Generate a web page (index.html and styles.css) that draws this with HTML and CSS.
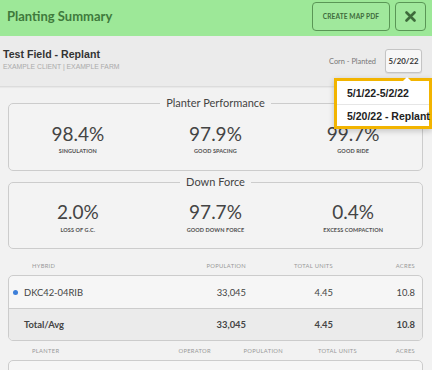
FILE: index.html
```html
<!DOCTYPE html>
<html lang="en">
<head>
  <meta charset="UTF-8" />
  <meta name="viewport" content="width=device-width, initial-scale=1.0" />
  <title>Planting Summary</title>
  <link rel="stylesheet" href="styles.css">
</head>
<body>
  <header class="topbar">
    <h1 class="title">Planting Summary</h1>
    <button class="btn-pdf">CREATE MAP PDF</button>
    <button class="btn-close" aria-label="Close">
      <svg width="11" height="11" viewBox="0 0 11 11"><path d="M1.5 1.5 L9.5 9.5 M9.5 1.5 L1.5 9.5" stroke="#3e6b3b" stroke-width="2.6" stroke-linecap="round"/></svg>
    </button>
  </header>

  <section class="field-bar">
    <div class="field-info">
      <div class="field-name">Test Field - Replant</div>
      <div class="field-sub">EXAMPLE CLIENT | EXAMPLE FARM</div>
    </div>
    <div class="crop-info">
      <span class="crop">Corn - Planted</span>
      <button class="date-btn">5/20/22</button>
    </div>
  </section>

  <main class="content">
    <fieldset class="stat-group">
      <legend>Planter Performance</legend>
      <div class="stats">
        <div class="stat"><div class="value">98.4%</div><div class="label">Singulation</div></div>
        <div class="stat"><div class="value">97.9%</div><div class="label">Good Spacing</div></div>
        <div class="stat"><div class="value">99.7%</div><div class="label">Good Ride</div></div>
      </div>
    </fieldset>

    <fieldset class="stat-group second">
      <legend>Down Force</legend>
      <div class="stats">
        <div class="stat"><div class="value">2.0%</div><div class="label">Loss of G.C.</div></div>
        <div class="stat"><div class="value">97.7%</div><div class="label">Good Down Force</div></div>
        <div class="stat"><div class="value">0.4%</div><div class="label">Excess Compaction</div></div>
      </div>
    </fieldset>

    <div class="table-head hybrid-cols">
      <span class="name">Hybrid</span>
      <span>Population</span>
      <span>Total Units</span>
      <span>Acres</span>
    </div>
    <div class="table-box">
      <div class="row hybrid-cols">
        <span class="name"><i class="dot"></i>DKC42-04RIB</span>
        <span>33,045</span>
        <span>4.45</span>
        <span>10.8</span>
      </div>
      <div class="row total hybrid-cols">
        <span class="name"><i class="dot blank"></i>Total/Avg</span>
        <span>33,045</span>
        <span>4.45</span>
        <span>10.8</span>
      </div>
    </div>

    <div class="table-head planter-cols">
      <span class="name">Planter</span>
      <span>Operator</span>
      <span>Population</span>
      <span>Total Units</span>
      <span>Acres</span>
    </div>
    <div class="table-box">
      <div class="row planter-cols">
        <span class="name">&nbsp;</span>
      </div>
    </div>
  </main>

  <div class="date-menu">
    <div class="menu-item">5/1/22-5/2/22</div>
    <div class="menu-item">5/20/22 - Replant</div>
  </div>
</body>
</html>
```

FILE: styles.css
```css
:root {
  --green-bg: #9de898;
  --green-dark: #3e6b3b;
  --panel: #f2f2f2;
  --bar: #ebebeb;
  --line: #cccccc;
  --text: #444444;
  --muted: #999999;
  --orange: #f2b400;
}
*, *::before, *::after { box-sizing: border-box; }
body {
  margin: 0;
  width: 432px; height: 370px;
  overflow: hidden;
  font-family: 'Lato', sans-serif;
  background: var(--panel);
  color: var(--text);
}

/* top bar */
.topbar {
  height: 36px;
  display: flex; align-items: center; gap: 5px;
  padding: 0 6px 4px 7px;
  background: var(--green-bg);
}
.title {
  flex: 1; margin: 0;
  font-size: 13px; font-weight: 700;
  color: #3f7a3c;
}
.btn-pdf, .btn-close {
  height: 29px;
  background: rgba(255,255,255,0.04);
  border: 1.5px solid #5a9656;
  border-radius: 4px;
  color: var(--green-dark);
  font-family: 'Lato', sans-serif;
  cursor: pointer;
}
.btn-pdf {
  width: 78px; padding: 0;
  font-size: 6.6px; font-weight: 700; letter-spacing: .1px;
}
.btn-close {
  width: 31px; padding: 0;
  display: flex; align-items: center; justify-content: center;
}

/* field bar */
.field-bar {
  height: 51px;
  display: flex; justify-content: space-between; align-items: center;
  padding: 0 10px 4px 3px;
  background: var(--bar);
  border-bottom: 1px solid #dcdcdc;
  box-shadow: 0 1px 1px rgba(0,0,0,0.04);
}
.field-name {
  font-family: 'Liberation Sans', Arial, sans-serif;
  font-size: 10.6px; font-weight: 700;
  color: #333;
}
.field-sub {
  margin-top: 3px;
  font-family: 'Liberation Sans', Arial, sans-serif;
  font-size: 6.8px;
  color: #aaa;
}
.crop-info {
  display: flex; align-items: center; gap: 9px;
  padding-top: 4px;
}
.crop { font-size: 7.4px; color: #777; }
.date-btn {
  width: 37px; height: 24px; padding: 0;
  font-family: 'Lato', sans-serif;
  font-size: 7.8px; font-weight: 700;
  color: #333;
  background: #f7f7f7;
  border: 1px solid #c4c4c4;
  border-radius: 3px;
  box-shadow: 0 1px 1px rgba(0,0,0,0.08);
}

/* stat groups */
.content { padding: 9px 9px 0 8px; }
.stat-group {
  margin: 0; padding: 0 0 15px;
  border: 1px solid var(--line);
  border-radius: 5px;
  background: #f3f3f3;
}
.stat-group.second { margin-top: 4px; padding-bottom: 14px; }
.stat-group legend {
  margin: 0 auto;
  padding: 0 6px;
  font-size: 11px; line-height: 14px;
  color: #444;
}
.stats {
  display: grid; grid-template-columns: repeat(3, 1fr);
  padding-top: 14px;
  text-align: center;
}
.second .stats { padding-top: 13px; }
.value {
  font-size: 19px; line-height: 20px;
  color: #444;
}
.label {
  margin-top: 3px;
  font-size: 5.5px; line-height: 8px; font-weight: 700;
  letter-spacing: .1px; text-transform: uppercase;
  color: #505050;
}
.second .label { margin-top: 4px; }

/* tables */
.hybrid-cols { display: grid; grid-template-columns: 1fr 80px 87px 82px; }
.planter-cols { display: grid; grid-template-columns: 1fr 56px 72px 74px 58px; }
.table-head {
  margin-top: 12px;
  padding: 0 8px 0 24px;
  font-size: 5.8px; line-height: 10px;
  letter-spacing: .3px; text-transform: uppercase;
  color: #999;
  text-align: right;
}
.table-head .name { text-align: left; }
.table-box {
  margin-top: 4px;
  border: 1px solid var(--line);
  border-radius: 5px;
  overflow: hidden;
  background: #f6f6f6;
}
.row {
  height: 32px;
  align-items: center;
  padding: 0 7px 0 4px;
  font-size: 9.4px;
  color: #444;
  text-align: right;
}
.row .name { display: flex; align-items: center; gap: 6px; text-align: left; }
.row.total {
  height: 32px;
  border-top: 1px solid var(--line);
  background: #ebebeb;
  font-weight: 700;
}
.dot {
  width: 5px; height: 5px;
  border-radius: 50%;
  background: #3d7fd9;
}
.dot.blank { visibility: hidden; }
.table-head.planter-cols { margin-top: 5px; }

/* date dropdown */
.date-menu {
  position: absolute; left: 334px; top: 78px;
  width: 98px; height: 51px;
  padding-top: 1px;
  border: 3px solid var(--orange);
  background: #fff;
  box-shadow: 0 2px 6px rgba(0,0,0,0.2);
  font-family: 'Liberation Sans', Arial, sans-serif;
  font-size: 10.5px; font-weight: 700;
  color: #222;
}
.date-menu::before {
  content: ""; position: absolute;
  left: 66px; top: -8px;
  border: 4px solid transparent;
  border-bottom-color: #fff;
}
.menu-item {
  height: 22px; line-height: 22px;
  padding-left: 10px;
  white-space: nowrap;
}
.menu-item + .menu-item { border-top: 1px solid #e6e6e6; }
```
